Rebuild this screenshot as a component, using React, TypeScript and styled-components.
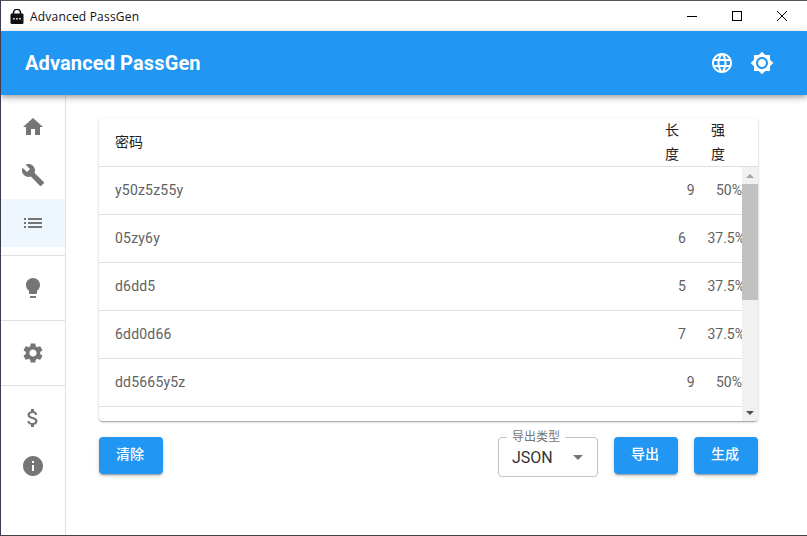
import React from "react";
import styled, { createGlobalStyle } from "styled-components";

const FONT = `Roboto, "Noto Sans CJK SC", sans-serif`;

const GlobalStyle = createGlobalStyle`
    html, body {
        margin: 0;
        height: 100%;
        overflow: hidden;
        background: #fff;
    }
    * {
        box-sizing: border-box;
    }
`;

const ICONS = {
    home: "M10 20v-6h4v6h5v-8h3L12 3 2 12h3v8z",
    build: "M22.7 19l-9.1-9.1c.9-2.3.4-5-1.5-6.9-2-2-5-2.4-7.4-1.3L9 6 6 9 1.6 4.7C.4 7.1.9 10.1 2.9 12.1c1.9 1.9 4.6 2.4 6.9 1.5l9.1 9.1c.4.4 1 .4 1.4 0l2.3-2.3c.5-.4.5-1.1.1-1.4z",
    list: "M3 13h2v-2H3v2zm0 4h2v-2H3v2zm0-8h2V7H3v2zm4 4h14v-2H7v2zm0 4h14v-2H7v2zM7 7v2h14V7H7z",
    bulb: "M9 21c0 .55.45 1 1 1h4c.55 0 1-.45 1-1v-1H9v1zm3-19C8.14 2 5 5.14 5 9c0 2.38 1.19 4.47 3 5.74V17c0 .55.45 1 1 1h6c.55 0 1-.45 1-1v-2.26c1.81-1.27 3-3.36 3-5.74 0-3.86-3.14-7-7-7z",
    settings: "M19.14 12.94c.04-.3.06-.61.06-.94 0-.32-.02-.64-.07-.94l2.03-1.58c.18-.14.23-.41.12-.61l-1.92-3.32c-.12-.22-.37-.29-.59-.22l-2.39.96c-.5-.38-1.03-.7-1.62-.94l-.36-2.54c-.04-.24-.24-.41-.48-.41h-3.84c-.24 0-.43.17-.47.41l-.36 2.54c-.59.24-1.13.57-1.62.94l-2.39-.96c-.22-.08-.47 0-.59.22L2.74 8.87c-.12.21-.08.47.12.61l2.03 1.58c-.05.3-.09.63-.09.94s.02.64.07.94l-2.03 1.58c-.18.14-.23.41-.12.61l1.92 3.32c.12.22.37.29.59.22l2.39-.96c.5.38 1.03.7 1.62.94l.36 2.54c.05.24.24.41.48.41h3.84c.24 0 .44-.17.47-.41l.36-2.54c.59-.24 1.13-.56 1.62-.94l2.39.96c.22.08.47 0 .59-.22l1.92-3.32c.12-.22.07-.47-.12-.61l-2.01-1.58zM12 15.6c-1.98 0-3.6-1.62-3.6-3.6s1.62-3.6 3.6-3.6 3.6 1.62 3.6 3.6-1.62 3.6-3.6 3.6z",
    money: "M11.8 10.9c-2.27-.59-3-1.2-3-2.15 0-1.09 1.01-1.85 2.7-1.85 1.78 0 2.44.85 2.5 2.1h2.21c-.07-1.72-1.12-3.3-3.21-3.81V3h-3v2.16c-1.94.42-3.5 1.68-3.5 3.61 0 2.31 1.91 3.46 4.7 4.13 2.5.6 3 1.48 3 2.41 0 .69-.49 1.79-2.7 1.79-2.06 0-2.87-.92-2.98-2.1h-2.2c.12 2.19 1.76 3.42 3.68 3.83V21h3v-2.15c1.95-.37 3.5-1.5 3.5-3.55 0-2.84-2.43-3.81-4.7-4.4z",
    info: "M12 2C6.48 2 2 6.48 2 12s4.48 10 10 10 10-4.48 10-10S17.52 2 12 2zm1 15h-2v-6h2v6zm0-8h-2V7h2v2z",
    language: "M11.99 2C6.47 2 2 6.48 2 12s4.47 10 9.99 10C17.52 22 22 17.52 22 12S17.52 2 11.99 2zm6.93 6h-2.95c-.32-1.25-.78-2.45-1.38-3.56 1.84.63 3.37 1.91 4.33 3.56zM12 4.04c.83 1.2 1.48 2.53 1.91 3.96h-3.82c.43-1.43 1.08-2.76 1.91-3.96zM4.26 14C4.1 13.36 4 12.69 4 12s.1-1.36.26-2h3.38c-.08.66-.14 1.32-.14 2 0 .68.06 1.34.14 2H4.26zm.82 2h2.95c.32 1.25.78 2.45 1.38 3.56-1.84-.63-3.37-1.9-4.33-3.56zm2.95-8H5.08c.96-1.66 2.49-2.93 4.33-3.56C8.81 5.55 8.35 6.75 8.03 8zM12 19.96c-.83-1.2-1.48-2.53-1.91-3.96h3.82c-.43 1.43-1.08 2.76-1.91 3.96zM14.34 14H9.66c-.09-.66-.16-1.32-.16-2 0-.68.07-1.35.16-2h4.68c.09.65.16 1.32.16 2 0 .68-.07 1.34-.16 2zm.25 5.56c.6-1.11 1.06-2.31 1.38-3.56h2.95c-.96 1.65-2.49 2.93-4.33 3.56zM16.36 14c.08-.66.14-1.32.14-2 0-.68-.06-1.34-.14-2h3.38c.16.64.26 1.31.26 2s-.1 1.36-.26 2h-3.38z",
    brightness: "M20 8.69V4h-4.69L12 .69 8.69 4H4v4.69L.69 12 4 15.31V20h4.69L12 23.31 15.31 20H20v-4.69L23.31 12 20 8.69zM12 18c-3.31 0-6-2.69-6-6s2.69-6 6-6 6 2.69 6 6-2.69 6-6 6zm0-10c-2.21 0-4 1.79-4 4s1.79 4 4 4 4-1.79 4-4-1.79-4-4-4z",
};

const Icon = ({ name }: { name: keyof typeof ICONS }) => (
    <svg width="24" height="24" viewBox="0 0 24 24" fill="currentColor">
        <path d={ICONS[name]} />
    </svg>
);

const ROWS = [
    { password: "y50z5z55y", length: 9, strength: "50%", overflow: 0 },
    { password: "05zy6y", length: 6, strength: "37.5%", overflow: 3 },
    { password: "d6dd5", length: 5, strength: "37.5%", overflow: 3 },
    { password: "6dd0d66", length: 7, strength: "37.5%", overflow: 3 },
    { password: "dd5665y5z", length: 9, strength: "50%", overflow: 0 },
];

const App = () => {
    return (
        <Window>
            <GlobalStyle />
            <TitleBar>
                <svg width="14" height="15" viewBox="0 0 14 15">
                    <path d="M3.5 5V3.8a3.5 3.5 0 0 1 7 0V5" fill="none" stroke="#111" strokeWidth="1.6" />
                    <rect x="0.5" y="4.5" width="13" height="10.5" rx="1.2" fill="#111" />
                    <rect x="3.2" y="9" width="1.5" height="1.5" fill="#fff" />
                    <rect x="6.2" y="9" width="1.5" height="1.5" fill="#fff" />
                    <rect x="9.2" y="9" width="1.5" height="1.5" fill="#fff" />
                </svg>
                <WindowTitle>Advanced PassGen</WindowTitle>
                <WindowControls>
                    <WindowButton>
                        <svg width="10" height="10" viewBox="0 0 10 10">
                            <path d="M0 5.5h10" stroke="#000" />
                        </svg>
                    </WindowButton>
                    <WindowButton>
                        <svg width="10" height="10" viewBox="0 0 10 10">
                            <rect x="0.5" y="0.5" width="9" height="9" fill="none" stroke="#000" />
                        </svg>
                    </WindowButton>
                    <WindowButton>
                        <svg width="10" height="10" viewBox="0 0 10 10">
                            <path d="M0 0l10 10M10 0L0 10" stroke="#000" />
                        </svg>
                    </WindowButton>
                </WindowControls>
            </TitleBar>

            <AppBar>
                <AppTitle>Advanced PassGen</AppTitle>
                <AppBarActions>
                    <Icon name="language" />
                    <Icon name="brightness" />
                </AppBarActions>
            </AppBar>

            <Body>
                <Sidebar>
                    <NavGroup>
                        <NavItem><Icon name="home" /></NavItem>
                        <NavItem><Icon name="build" /></NavItem>
                        <NavItem $selected><Icon name="list" /></NavItem>
                    </NavGroup>
                    <NavGroup>
                        <NavItem><Icon name="bulb" /></NavItem>
                    </NavGroup>
                    <NavGroup>
                        <NavItem><Icon name="settings" /></NavItem>
                    </NavGroup>
                    <NavGroup $last>
                        <NavItem><Icon name="money" /></NavItem>
                        <NavItem><Icon name="info" /></NavItem>
                    </NavGroup>
                </Sidebar>

                <Main>
                    <Paper>
                        <HeaderRow>
                            <HeaderPassword>密码</HeaderPassword>
                            <HeaderCell>长度</HeaderCell>
                            <HeaderCell>强度</HeaderCell>
                        </HeaderRow>
                        <ListArea>
                            <List>
                                {ROWS.map((row) => (
                                    <Row key={row.password}>
                                        <Password>{row.password}</Password>
                                        <Value>{row.length}</Value>
                                        <Strength $overflow={row.overflow}>{row.strength}</Strength>
                                    </Row>
                                ))}
                            </List>
                            <Scrollbar>
                                <ScrollArrow $up $disabled />
                                <ScrollThumb />
                                <ScrollArrow />
                            </Scrollbar>
                        </ListArea>
                    </Paper>

                    <Actions>
                        <Button>清除</Button>
                        <RightActions>
                            <SelectBox>
                                <SelectLabel>导出类型</SelectLabel>
                                <SelectValue>JSON</SelectValue>
                                <SelectCaret />
                            </SelectBox>
                            <Button>导出</Button>
                            <Button>生成</Button>
                        </RightActions>
                    </Actions>
                </Main>
            </Body>
        </Window>
    );
};
export default App;

const Window = styled.div`
    display: flex;
    flex-direction: column;
    height: 100vh;
    border-top: 1px solid #555;
    border-left: 1px solid #3c3c50;
    border-bottom: 1px solid #444;
    font-family: ${FONT};
    overflow: hidden;
`;

const TitleBar = styled.div`
    display: flex;
    align-items: center;
    flex: none;
    height: 30px;
    padding-left: 9px;
    background: #fff;
`;

const WindowTitle = styled.span`
    margin-left: 6px;
    font-family: "Open Sans", sans-serif;
    font-size: 12px;
    letter-spacing: 0.2px;
    color: #111;
`;

const WindowControls = styled.div`
    display: flex;
    margin-left: auto;
    margin-right: 3px;
`;

const WindowButton = styled.div`
    display: flex;
    align-items: center;
    justify-content: center;
    width: 45px;
    height: 30px;
`;

const AppBar = styled.header`
    position: relative;
    z-index: 2;
    display: flex;
    align-items: center;
    flex: none;
    height: 64px;
    padding: 0 33px 0 24px;
    background: #2196f3;
    color: #fff;
    box-shadow: 0 2px 4px -1px rgba(0, 0, 0, 0.2), 0 4px 5px 0 rgba(0, 0, 0, 0.14), 0 1px 10px 0 rgba(0, 0, 0, 0.12);
`;

const AppTitle = styled.h1`
    margin: 0;
    font-size: 20px;
    font-weight: 700;
    letter-spacing: 0.12px;
`;

const AppBarActions = styled.div`
    display: flex;
    gap: 16px;
    margin-left: auto;
`;

const Body = styled.div`
    display: flex;
    flex: 1;
    min-height: 0;
`;

const Sidebar = styled.nav`
    flex: none;
    width: 65px;
    padding-top: 8px;
    border-right: 1px solid #e0e0e0;
`;

const NavGroup = styled.div<{ $last?: boolean }>`
    padding-bottom: 8px;
    margin-bottom: 8px;
    border-bottom: ${(p) => (p.$last ? "none" : "1px solid #e0e0e0")};
`;

const NavItem = styled.div<{ $selected?: boolean }>`
    display: flex;
    align-items: center;
    height: 48px;
    padding-left: 20px;
    color: #757575;
    background: ${(p) => (p.$selected ? "#eef7fe" : "transparent")};
`;

const Main = styled.main`
    flex: 1;
    min-width: 0;
    padding: 23px 49px 0 33px;
`;

const Paper = styled.section`
    border-radius: 4px;
    background: #fff;
    overflow: hidden;
    box-shadow: 0 1px 3px 0 rgba(0, 0, 0, 0.2), 0 1px 1px 0 rgba(0, 0, 0, 0.14), 0 2px 1px -1px rgba(0, 0, 0, 0.12);
`;

const HeaderRow = styled.div`
    display: flex;
    align-items: center;
    height: 49px;
    padding: 0 32px 0 16px;
    border-bottom: 1px solid #e0e0e0;
    font-size: 14px;
    color: #212121;
`;

const HeaderPassword = styled.div`
    flex: 1;
    padding-bottom: 2px;
`;

const HeaderCell = styled.div`
    width: 15px;
    margin-left: 31px;
    line-height: 24px;
    word-break: break-all;
`;

const ListArea = styled.div`
    display: flex;
    height: 254px;
`;

const List = styled.div`
    flex: 1;
    min-width: 0;
    overflow: hidden;
`;

const Row = styled.div`
    display: flex;
    align-items: center;
    height: 48px;
    padding: 0 0 2px 16px;
    border-bottom: 1px solid #e0e0e0;
    font-size: 14px;
    color: #616161;
`;

const Password = styled.div`
    flex: 1;
    letter-spacing: 0.2px;
`;

const Value = styled.div`
    text-align: right;
`;

const Strength = styled.div<{ $overflow: number }>`
    flex: none;
    margin-left: 21.5px;
    margin-right: ${(p) => -p.$overflow}px;
`;

const Scrollbar = styled.div`
    display: flex;
    flex-direction: column;
    flex: none;
    width: 16px;
    background: #f1f1f1;
`;

const ScrollArrow = styled.div<{ $up?: boolean; $disabled?: boolean }>`
    display: flex;
    align-items: center;
    justify-content: center;
    flex: none;
    height: 17px;
    &::before {
        content: "";
        border-left: 4px solid transparent;
        border-right: 4px solid transparent;
        ${(p) => (p.$up ? "border-bottom" : "border-top")}: 4px solid ${(p) => (p.$disabled ? "#a3a3a3" : "#505050")};
    }
`;

const ScrollThumb = styled.div`
    flex: none;
    height: 116px;
    margin-bottom: auto;
    background: #c1c1c1;
`;

const Actions = styled.div`
    display: flex;
    justify-content: space-between;
    margin-top: 16px;
`;

const RightActions = styled.div`
    display: flex;
    align-items: flex-start;
    gap: 16px;
`;

const Button = styled.button`
    width: 64px;
    height: 37px;
    padding: 0 2px 5px 0;
    border: none;
    border-radius: 4px;
    background: #2196f3;
    color: #fff;
    font-family: ${FONT};
    font-size: 14px;
    font-weight: 500;
    box-shadow: 0 3px 1px -2px rgba(0, 0, 0, 0.2), 0 2px 2px 0 rgba(0, 0, 0, 0.14), 0 1px 5px 0 rgba(0, 0, 0, 0.12);
`;

const SelectBox = styled.div`
    position: relative;
    display: flex;
    align-items: center;
    justify-content: space-between;
    width: 100px;
    height: 40px;
    padding: 0 14px 0 13px;
    border: 1px solid #c4c4c4;
    border-radius: 4px;
`;

const SelectLabel = styled.span`
    position: absolute;
    top: -7px;
    left: 8px;
    padding: 0 5px;
    background: #fff;
    font-size: 12px;
    line-height: 12px;
    color: #757575;
`;

const SelectValue = styled.span`
    font-size: 16px;
    color: #333;
`;

const SelectCaret = styled.span`
    border-left: 5px solid transparent;
    border-right: 5px solid transparent;
    border-top: 5px solid #757575;
`;
